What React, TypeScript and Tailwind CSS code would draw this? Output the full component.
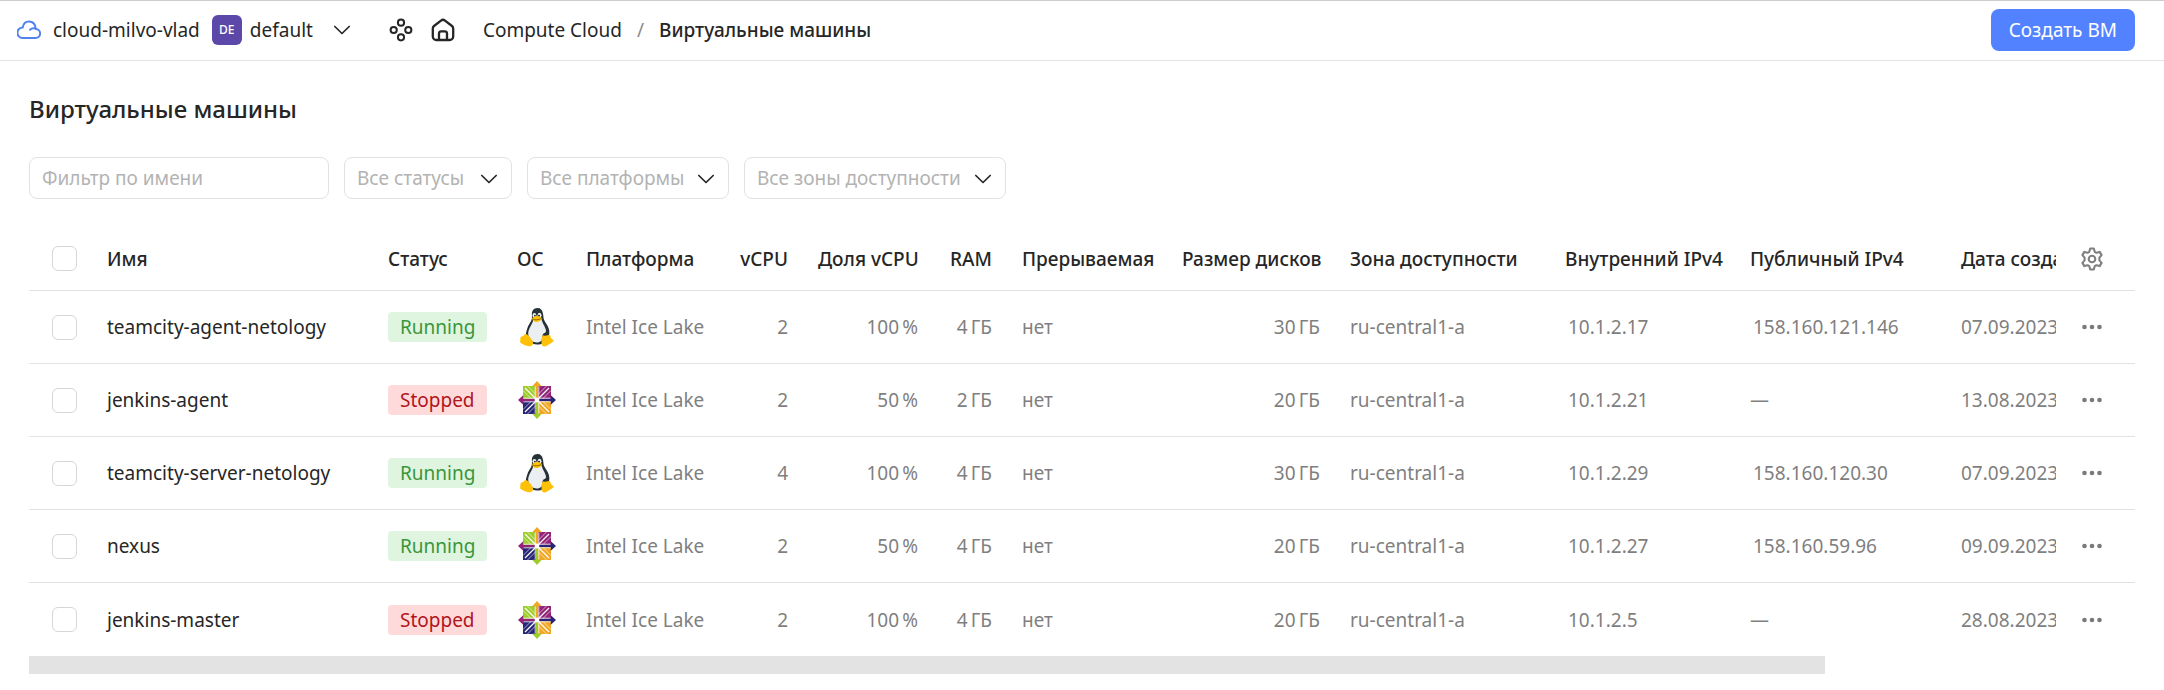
import type { ReactNode } from "react";

type Os = "linux" | "centos";

interface Vm {
  name: string;
  running: boolean;
  os: Os;
  vcpu: number;
  share: number;
  ram: number;
  disk: number;
  internalIp: string;
  publicIp: string | null;
  created: string;
}

// Narrow no-break space between a number and its unit
const NNBSP = "\u202f";

const vms: Vm[] = [
  { name: "teamcity-agent-netology", running: true, os: "linux", vcpu: 2, share: 100, ram: 4, disk: 30, internalIp: "10.1.2.17", publicIp: "158.160.121.146", created: "07.09.2023" },
  { name: "jenkins-agent", running: false, os: "centos", vcpu: 2, share: 50, ram: 2, disk: 20, internalIp: "10.1.2.21", publicIp: null, created: "13.08.2023" },
  { name: "teamcity-server-netology", running: true, os: "linux", vcpu: 4, share: 100, ram: 4, disk: 30, internalIp: "10.1.2.29", publicIp: "158.160.120.30", created: "07.09.2023" },
  { name: "nexus", running: true, os: "centos", vcpu: 2, share: 50, ram: 4, disk: 20, internalIp: "10.1.2.27", publicIp: "158.160.59.96", created: "09.09.2023" },
  { name: "jenkins-master", running: false, os: "centos", vcpu: 2, share: 100, ram: 4, disk: 20, internalIp: "10.1.2.5", publicIp: null, created: "28.08.2023" },
];

function CloudIcon() {
  return (
    <svg className="h-6 w-6" viewBox="0 0 24 24" fill="none" stroke="#5282ee" strokeWidth="2" strokeLinecap="round" strokeLinejoin="round" aria-hidden="true">
      <path d="M5.500 20h13a4.500 4.500 0 0 0 .3-9C18.300 6 15.500 3.500 12 3.500c-3.300 0-5.700 2.200-6.300 6.100A5.200 5.200 0 0 0 5.500 20Z" />
      <path d="M18.500 10.500c-2.500-.8-4.200-.2-5.500 1.300" />
    </svg>
  );
}

function Chevron({ className = "" }: { className?: string }) {
  return (
    <svg className={className} width="18" height="12" viewBox="0 0 18 12" fill="none" stroke="#262626" strokeWidth="1.7" strokeLinecap="round" strokeLinejoin="round" aria-hidden="true">
      <path d="M1.800 2.500 9 9.500l7.200-7" />
    </svg>
  );
}

function ServicesIcon() {
  return (
    <svg className="h-6 w-6" viewBox="0 0 24 24" fill="none" stroke="#262626" strokeWidth="2" aria-hidden="true">
      <circle cx="12" cy="4.700" r="3.100" />
      <circle cx="4.700" cy="12" r="3.100" />
      <circle cx="19.300" cy="12" r="3.100" />
      <circle cx="12" cy="19.300" r="3.100" />
    </svg>
  );
}

function HomeIcon() {
  return (
    <svg className="h-6 w-6" viewBox="0 0 24 24" fill="none" stroke="#262626" strokeWidth="2.3" strokeLinecap="round" strokeLinejoin="round" aria-hidden="true">
      <path d="M1.800 10.500c0-1 .4-1.900 1.200-2.500l7-5.400a3.200 3.200 0 0 1 4 0l7 5.400c.8.600 1.200 1.500 1.200 2.500v8a3.500 3.500 0 0 1-3.500 3.500H5.300a3.500 3.500 0 0 1-3.500-3.500Z" />
      <path d="M8 21.500v-6a2.200 2.200 0 0 1 2.200-2.200h3.600a2.200 2.200 0 0 1 2.200 2.200v6" />
    </svg>
  );
}

function GearIcon() {
  return (
    <svg className="h-6 w-6" viewBox="0 0 24 24" fill="none" stroke="#7f7f7f" strokeWidth="2.1" strokeLinejoin="round" aria-hidden="true">
      <path d="M10.200 1.500h3.600l.9 3.300 1.700 1 3.300-.9 1.900 3.200-2.200 2.500v2.800l2.200 2.500-1.900 3.200-3.300-.9-1.700 1-.9 3.300h-3.600l-.9-3.300-1.700-1-3.300.9-1.900-3.200 2.200-2.500v-2.800L2.400 8.100l1.900-3.200 3.300.9 1.700-1Z" />
      <circle cx="12" cy="12" r="3.300" />
    </svg>
  );
}

function DotsIcon() {
  return (
    <svg className="h-6 w-6" viewBox="0 0 24 24" fill="#7a7a7a" aria-hidden="true">
      <circle cx="4.500" cy="12" r="2.300" />
      <circle cx="12" cy="12" r="2.300" />
      <circle cx="19.500" cy="12" r="2.300" />
    </svg>
  );
}

function TuxIcon() {
  return (
    <svg className="h-10 w-10" viewBox="0 0 40 40" role="img" aria-label="Linux">
      <path d="M20.500 1c-4 0-5.900 2.900-5.600 7 .3 4.200-.3 5.500-2.600 9-2 3.200-2.500 6-3.400 9.500-.5 2 1 5 3.600 8 1.900 2.300 4.500 3 7.700 3 4.600 0 8.200-1.600 10.300-5.500 2-3.800 2.300-6.700 1.300-10.200-.9-3.400-3.700-6.200-4.900-9.300C26 9.500 27 1 20.500 1Z" fill="#263238" />
      <path d="M16.400 12.500c-.5 3.800-3.600 7-4.800 11.200-1 3.500-.2 7.500 3.400 10.300 3 2.200 7.600 1.700 9.700-.6.700-2.800.2-6.900 3.300-7.600 1.200-.4 1.300-2.400.4-4.400-1.300-3.600-3-5.500-4-9.200Z" fill="#eceff1" />
      <ellipse cx="17.400" cy="8.300" rx="1.900" ry="2.400" fill="#eceff1" />
      <ellipse cx="22.500" cy="8.300" rx="2" ry="2.500" fill="#eceff1" />
      <circle cx="17.900" cy="8.700" r="0.900" fill="#212121" />
      <circle cx="22" cy="8.700" r="1" fill="#212121" />
      <path d="M15.200 11.800c0-1.500 2.800-2.900 4.800-2.900s4.800 1.200 4.800 2.500c0 1.700-3.500 3.700-5.500 3.700s-4.100-1.500-4.100-3.300Z" fill="#ffc107" />
      <path d="M15.600 12c2.700 1.300 5.700 1.100 8.500-.5" stroke="#634703" strokeWidth=".7" fill="none" />
      <path d="M9 27c1.800.1 6.600 5.800 7 8.200.5 2.800-1.500 4.300-4.400 4C8.500 38.700 4 36.700 3.300 35.500c-.5-1 .3-3.200.1-4.600.1-1.600 1.600-1.200 2.700-1.900 1-.6 1.400-2.100 2.900-2Z" fill="#ffc107" />
      <path d="M25.800 28.200c-1.400 2.600-1.900 9.100-.4 10.600 2.200 1.800 5-.4 7.200-1.900 1.800-1.100 4.500-2.200 4.100-3.400-.4-1-3-1.600-3.300-4.500-.3-1.300-1.500-1-2.700-.8-1.700.4-3.100.8-4.900 0Z" fill="#ffc107" />
    </svg>
  );
}

function CentosIcon() {
  return (
    <svg className="h-10 w-10" viewBox="0 0 40 40" role="img" aria-label="CentOS">
      <path d="M6 6h13v13H6Z" fill="#9ccd2a" />
      <path d="M21 6h13v13H21Z" fill="#932279" />
      <path d="M6 21h13v13H6Z" fill="#262577" />
      <path d="M21 21h13v13H21Z" fill="#efa724" />
      <g stroke="#fff" strokeWidth="1.200" fill="none">
        <path d="M6 10.500 17 21.500M10.500 6 21 16.500M34 10.500 23 21.500M29.500 6 19 16.500M6 29.500 17 18.500M10.500 34 21 23.500M34 29.500 23 18.500M29.500 34 19 23.500" strokeWidth=".6" />
        <path d="M8 8l24 24M32 8 8 32" />
      </g>
      <path d="M20 1 24.800 6.200h-3.600V17L20 20l-1.200-3V6.200h-3.600Z" fill="#efa724" />
      <path d="M39 20l-5.200 4.800v-3.600H23L20 20l3-1.200h10.800v-3.600Z" fill="#262577" />
      <path d="M20 39l-4.800-5.200h3.600V23l1.200-3 1.200 3v10.800h3.600Z" fill="#9ccd2a" />
      <path d="M1 20l5.200-4.800v3.600H17l3 1.200-3 1.200H6.200v3.600Z" fill="#932279" />
      <path d="M18.200 6.500v11.700H6.500M21.800 6.500v11.700h11.700M18.200 33.500V21.800H6.500M21.800 33.500V21.800h11.700" stroke="#fff" strokeWidth=".8" fill="none" />
      <circle cx="20" cy="20" r="2.400" fill="#fff" />
    </svg>
  );
}

function Checkbox({ label }: { label: string }) {
  return (
    <input
      type="checkbox"
      aria-label={label}
      className="block h-[25px] w-[25px] appearance-none rounded-md border border-[#d6d6d6] bg-white checked:bg-[#5282ff]"
    />
  );
}

function FilterSelect({ label, width }: { label: string; width: string }) {
  return (
    <div className={`relative ${width}`}>
      <select
        aria-label={label}
        className="h-[42px] w-full appearance-none rounded-lg border border-[#e2e2e2] bg-white pr-9 pl-3 text-[#b3b3b3]"
      >
        <option>{label}</option>
      </select>
      <Chevron className="pointer-events-none absolute top-4 right-[14px]" />
    </div>
  );
}

function Th({ children, right = false }: { children: ReactNode; right?: boolean }) {
  return (
    <th scope="col" className={`border-b border-[#e2e2e2] px-[15px] font-medium text-[#262626] ${right ? "text-right" : "text-left"}`}>
      {children}
    </th>
  );
}

function Td({ children, right = false }: { children: ReactNode; right?: boolean }) {
  return (
    <td className={`border-b border-[#e2e2e2] px-[15px] group-last:border-b-0 ${right ? "text-right" : "text-left"}`}>
      {children}
    </td>
  );
}

function StatusBadge({ running }: { running: boolean }) {
  return (
    <span className={`inline-flex h-[30px] items-center rounded px-3 ${running ? "bg-[#e0f5e0] text-[#3a963a]" : "bg-[#ffdada] text-[#b0151c]"}`}>
      {running ? "Running" : "Stopped"}
    </span>
  );
}

export default function App() {
  return (
    <div className="min-h-screen border-t border-[#cccccc] bg-white font-['Noto_Sans',sans-serif] text-[19px] leading-6 text-[#262626]">
      <header className="flex h-[60px] items-center border-b border-[#e2e2e2] pr-[29px] pb-px pl-[17px]">
        <a href="#cloud" className="flex items-center gap-3">
          <CloudIcon />
          cloud-milvo-vlad
        </a>
        <button type="button" className="ml-3 flex items-center">
          <span className="flex h-[30px] w-[30px] items-center justify-center rounded-md bg-[#5c48a8] text-xs font-medium text-white">DE</span>
          <span className="ml-2">default</span>
          <Chevron className="ml-5" />
        </button>
        <button type="button" aria-label="Все сервисы" className="ml-[38px]">
          <ServicesIcon />
        </button>
        <a href="#home" aria-label="Главная" className="ml-[18px]">
          <HomeIcon />
        </a>
        <nav aria-label="Навигация" className="ml-7 flex items-center gap-[15px]">
          <a href="#compute">Compute Cloud</a>
          <span className="text-[#8c8c8c]">/</span>
          <a href="#vms" aria-current="page" className="font-medium">Виртуальные машины</a>
        </nav>
        <button type="button" className="ml-auto h-[42px] rounded-lg bg-[#5282ff] px-[18px] text-white">
          Создать ВМ
        </button>
      </header>

      <main className="px-[29px] pt-8">
        <h1 className="text-2xl leading-8 font-medium">Виртуальные машины</h1>

        <div className="mt-8 flex items-center gap-[15px]">
          <input
            type="text"
            aria-label="Фильтр по имени"
            placeholder="Фильтр по имени"
            className="h-[42px] w-[300px] rounded-lg border border-[#e2e2e2] px-3 placeholder:text-[#b3b3b3]"
          />
          <FilterSelect label="Все статусы" width="w-[168px]" />
          <FilterSelect label="Все платформы" width="w-[202px]" />
          <FilterSelect label="Все зоны доступности" width="w-[262px]" />
        </div>

        <div className="mt-7 overflow-x-auto [scrollbar-width:none]">
          <table className="w-[2470px] table-fixed border-separate border-spacing-0 whitespace-nowrap text-[#7f7f7f]">
            <colgroup>
              <col className="w-[63px]" />
              <col className="w-[281px]" />
              <col className="w-[129px]" />
              <col className="w-[69px]" />
              <col className="w-[154px]" />
              <col className="w-[78px]" />
              <col className="w-[130px]" />
              <col className="w-[74px]" />
              <col className="w-[160px]" />
              <col className="w-[168px]" />
              <col className="w-[215px]" />
              <col className="w-[185px]" />
              <col className="w-[211px]" />
              <col />
              <col className="w-[79px]" />
            </colgroup>
            <thead>
              <tr className="h-16">
                <th scope="col" className="border-b border-[#e2e2e2] pl-[23px]">
                  <Checkbox label="Выбрать все" />
                </th>
                <Th>Имя</Th>
                <Th>Статус</Th>
                <Th>ОС</Th>
                <Th>Платформа</Th>
                <Th right>vCPU</Th>
                <Th right>Доля vCPU</Th>
                <Th right>RAM</Th>
                <Th>Прерываемая</Th>
                <Th right>Размер дисков</Th>
                <Th>Зона доступности</Th>
                <Th>Внутренний IPv4</Th>
                <Th>Публичный IPv4</Th>
                <Th>Дата создания</Th>
                <th scope="col" className="sticky right-0 border-b border-[#e2e2e2] bg-white pl-6 text-left">
                  <button type="button" aria-label="Настройки таблицы" className="block">
                    <GearIcon />
                  </button>
                </th>
              </tr>
            </thead>
            <tbody>
              {vms.map((vm) => (
                <tr key={vm.name} className="group h-[73px]">
                  <td className="border-b border-[#e2e2e2] pl-[23px] group-last:border-b-0">
                    <Checkbox label={vm.name} />
                  </td>
                  <Td>
                    <a href={`#${vm.name}`} className="text-[#262626]">{vm.name}</a>
                  </Td>
                  <Td>
                    <StatusBadge running={vm.running} />
                  </Td>
                  <Td>{vm.os === "linux" ? <TuxIcon /> : <CentosIcon />}</Td>
                  <Td>Intel Ice Lake</Td>
                  <Td right>{vm.vcpu}</Td>
                  <Td right>{`${vm.share}${NNBSP}%`}</Td>
                  <Td right>{`${vm.ram}${NNBSP}ГБ`}</Td>
                  <Td>нет</Td>
                  <Td right>{`${vm.disk}${NNBSP}ГБ`}</Td>
                  <Td>ru-central1-a</Td>
                  <Td>
                    <span className="pl-[3px]">{vm.internalIp}</span>
                  </Td>
                  <Td>{vm.publicIp ? <span className="pl-[3px]">{vm.publicIp}</span> : "—"}</Td>
                  <Td>{vm.created}</Td>
                  <td className="sticky right-0 border-b border-[#e2e2e2] bg-white pl-6 group-last:border-b-0">
                    <button type="button" aria-label={`Действия: ${vm.name}`} className="block">
                      <DotsIcon />
                    </button>
                  </td>
                </tr>
              ))}
            </tbody>
          </table>
        </div>
        <div className="h-[18px] w-[85.3%] bg-[#e3e3e3]" />
      </main>
    </div>
  );
}
